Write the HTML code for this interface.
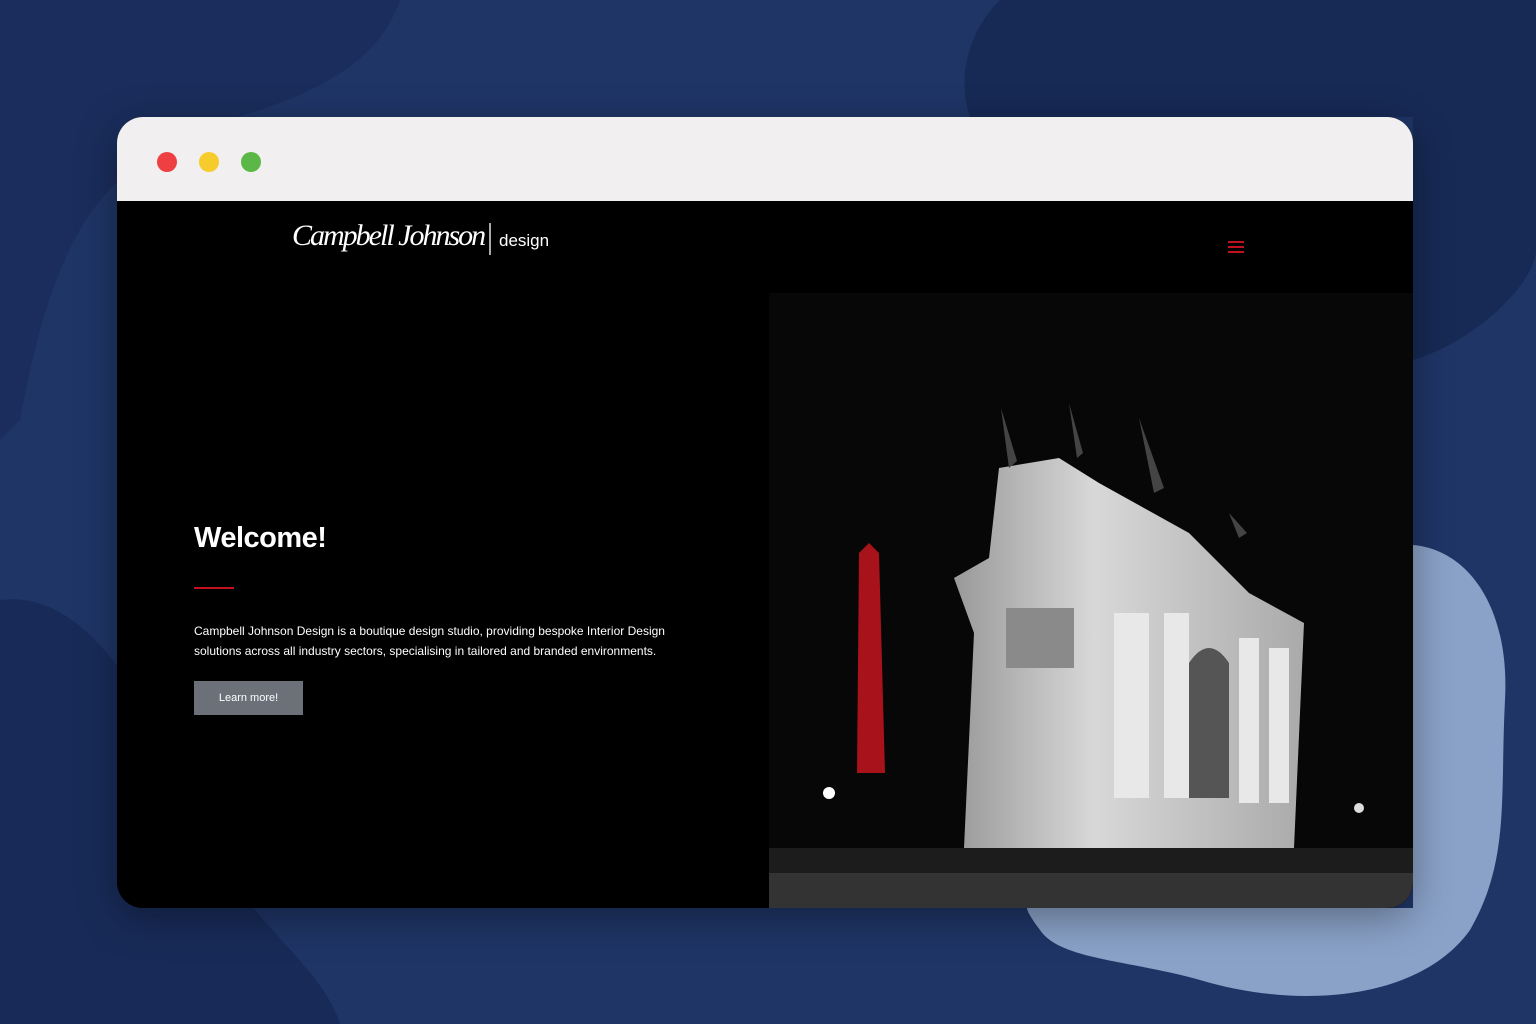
<!DOCTYPE html>
<html><head><meta charset="utf-8"><style>
html,body{margin:0;padding:0;width:1536px;height:1024px;overflow:hidden;background:#1f3566;font-family:"Liberation Sans",Arial,sans-serif}
.bg{position:absolute;left:0;top:0}
.win{position:absolute;left:117px;top:117px;width:1296px;height:791px;border-radius:26px;overflow:hidden;background:#000;box-shadow:0 10px 40px rgba(0,0,0,.35)}
.bar{height:84px;background:#f1efef;position:relative}
.dot{position:absolute;top:35px;width:20px;height:20px;border-radius:50%}
.page{position:absolute;top:84px;left:0;width:1296px;height:707px;background:#000}
h1{position:absolute;left:77px;top:321px;margin:0;color:#fff;font-size:29px;font-weight:bold;letter-spacing:-.5px}
.red{position:absolute;left:77px;top:386px;width:40px;height:2px;background:#c0121c}
p{position:absolute;left:77px;top:420px;margin:0;color:#fff;font-size:12px;line-height:20px;width:480px}
.btn{position:absolute;left:77px;top:480px;width:109px;height:34px;background:#6b7079;color:#fff;font-size:11px;line-height:34px;text-align:center}
.photo{position:absolute;left:652px;top:92px;width:644px;height:615px}
</style></head><body>
<svg class="bg" width="1536" height="1024">
<path d="M0 0H400C380 60 320 90 260 110C120 150 60 200 20 420L0 440Z" fill="#1a2d5c"/>
<path d="M1000 0C960 40 960 90 970 117H1413V360C1480 340 1536 280 1536 250V0Z" fill="#172a55"/>
<path d="M0 600C80 590 140 680 200 820C240 920 320 960 340 1024H0Z" fill="#182b58"/>
<path d="M1413 545C1470 550 1510 610 1505 700C1500 800 1510 860 1470 930C1420 1000 1300 1010 1200 980C1130 960 1060 960 1040 930C1025 910 1025 905 1030 908H1413Z" fill="#8aa2c8"/>
</svg>
<div class="win">
<div class="bar">
<div class="dot" style="left:40px;background:#ee4043"></div>
<div class="dot" style="left:82px;background:#f5cc2b"></div>
<div class="dot" style="left:124px;background:#5bb846"></div>
</div>
<div class="page">
<div style="position:absolute;left:175px;top:18px;color:#fff;font-family:'Liberation Serif',serif;font-style:italic;font-size:30px;letter-spacing:-2px">Campbell Johnson</div>
<div style="position:absolute;left:372px;top:22px;width:2px;height:32px;background:#aaa"></div>
<div style="position:absolute;left:382px;top:30px;color:#fff;font-size:17px">design</div>
<div style="position:absolute;left:1111px;top:40px;width:16px">
<div style="height:2px;background:#c0121c;margin-bottom:3px"></div><div style="height:2px;background:#c0121c;margin-bottom:3px"></div><div style="height:2px;background:#c0121c"></div></div>
<h1>Welcome!</h1>
<div class="red"></div>
<p>Campbell Johnson Design is a boutique design studio, providing bespoke Interior Design solutions across all industry sectors, specialising in tailored and branded environments.</p>
<div class="btn">Learn more!</div>
<svg class="photo" viewBox="0 0 644 615">
<defs><linearGradient id="g" x1="0" x2="1"><stop offset="0" stop-color="#999"/><stop offset=".4" stop-color="#d8d8d8"/><stop offset="1" stop-color="#aaa"/></linearGradient></defs>
<rect width="644" height="615" fill="#070707"/>
<rect x="0" y="555" width="644" height="25" fill="#1c1c1c"/>
<rect x="0" y="580" width="644" height="35" fill="#333"/>
<path d="M90 260L100 250L110 260L116 480H88Z" fill="#a8121a"/>
<path d="M230 175L290 165L330 190L420 240L480 300L535 330L525 555H195L205 340L185 285L220 265Z" fill="url(#g)"/>
<path d="M237 315H305V375H237Z" fill="#8a8a8a"/>
<path d="M345 320H380V505H345ZM395 320H420V505H395ZM470 345H490V510H470ZM500 355H520V510H500Z" fill="#e8e8e8"/>
<path d="M420 370Q440 340 460 370V505H420Z" fill="#555"/>
<path d="M232 115L240 175L248 168ZM300 110L308 165L314 160ZM370 125L385 200L395 195ZM460 220L470 245L478 240Z" fill="#444"/>
<circle cx="60" cy="500" r="6" fill="#fff"/>
<circle cx="590" cy="515" r="5" fill="#ddd"/>
</svg>
</div>
</div>
</body></html>
